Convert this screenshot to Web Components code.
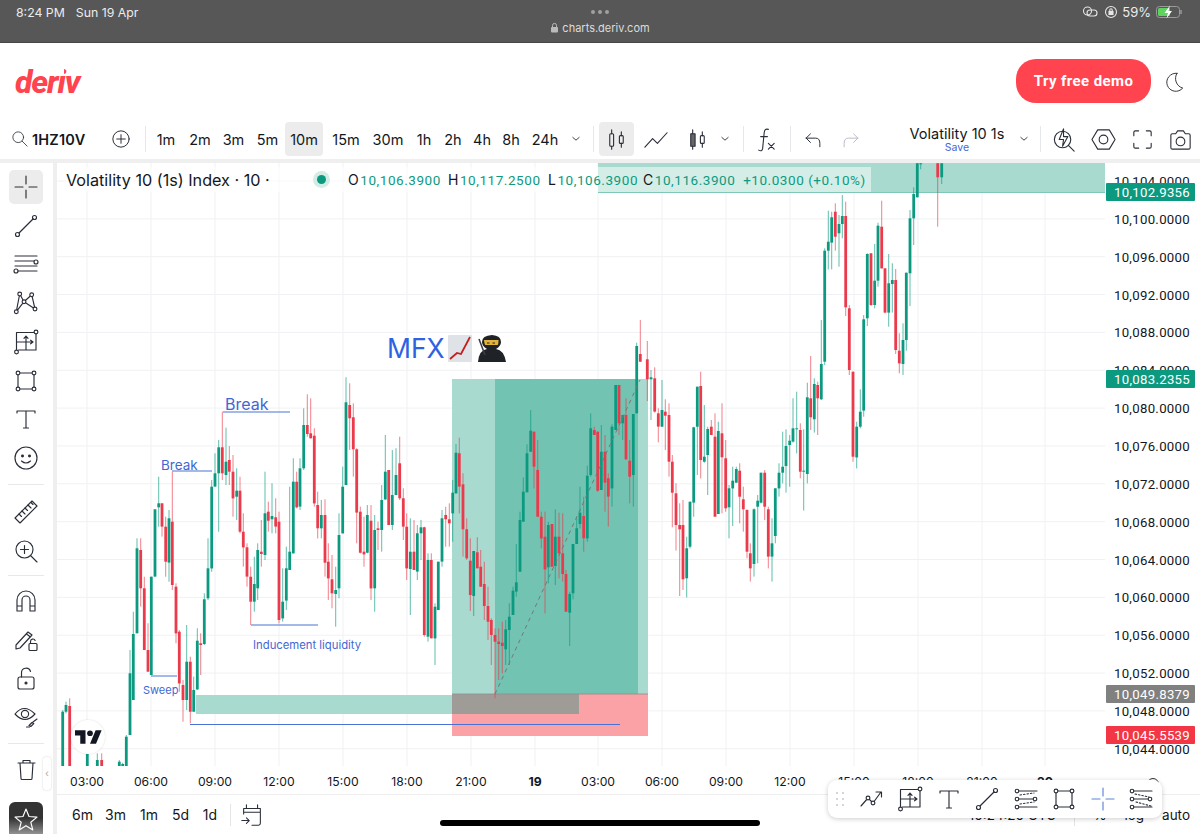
<!DOCTYPE html>
<html>
<head>
<meta charset="utf-8">
<title>charts.deriv.com</title>
<style>
  html, body { margin: 0; height: 100%; background: #fff; overflow: hidden; }
  body { width: 1200px; height: 834px; display: flex; flex-direction: column; font-family: Inter, "Liberation Sans", sans-serif; color: #131722; position: relative; }
  .main { flex: 1; display: flex; min-height: 0; }
  .right { flex: 1; display: flex; flex-direction: column; min-width: 0; }
</style>
</head>
<body>
<status-bar></status-bar>
<site-header></site-header>
<top-toolbar></top-toolbar>
<div class="main">
  <side-toolbar></side-toolbar>
  <div class="right">
    <chart-pane></chart-pane>
    <bottom-bar></bottom-bar>
  </div>
</div>
<float-toolbar></float-toolbar>
<home-bar></home-bar>

<script>
const ICONS = {
  cross: '<path d="M14 3v8M14 17v8M3 14h8M17 14h8"/>',
  line: '<circle cx="5.500" cy="22.500" r="2"/><circle cx="22.500" cy="5.500" r="2"/><path d="M7 21 21 7"/>',
  fib: '<path d="M3 5h22M3 10h19M3 15h22M6 20h19"/><circle cx="24" cy="11" r="2"/><circle cx="4" cy="20" r="2"/>',
  fibdots: '<path d="M5 6h20M5 22h20M6 14h16"/><path d="M8 10l14-2M8 19l14-2" stroke-dasharray="1.500 2"/><circle cx="5" cy="6" r="1.800" fill="#fff"/><circle cx="5" cy="14" r="1.800" fill="#fff"/><circle cx="5" cy="22" r="1.800" fill="#fff"/><circle cx="23" cy="14" r="1.800" fill="#fff"/>',
  fibdown: '<path d="M5 6h20M5 14h16M5 22h20"/><path d="M8 9l14 3M9 17l15 4" stroke-dasharray="1.500 2"/><circle cx="5" cy="6" r="1.800" fill="#fff"/><circle cx="5" cy="14" r="1.800" fill="#fff"/><circle cx="5" cy="22" r="1.800" fill="#fff"/><circle cx="23" cy="14" r="1.800" fill="#fff"/>',
  xabcd: '<path d="M4.300 22.700 7.700 5 12 12.700 19.700 5.700 23 20 12 12.700 4.300 22.700"/><circle cx="4.300" cy="22.700" r="1.900" fill="#fff"/><circle cx="7.700" cy="5" r="1.900" fill="#fff"/><circle cx="12" cy="12.700" r="1.900" fill="#fff"/><circle cx="19.700" cy="5.700" r="1.900" fill="#fff"/><circle cx="23" cy="20" r="1.900" fill="#fff"/>',
  pos: '<path d="M4.500 22V4.500H24V22H6.500M14 22V8M14 8l-2 2.400M14 8l2 2.400M4.500 14H21M21 14l-2.400-1.800M21 14l-2.400 1.800"/><circle cx="24" cy="4" r="1.900" fill="#fff"/><circle cx="4.500" cy="24" r="1.900" fill="#fff"/>',
  rect: '<path d="M6 6h16v16H6z"/><circle cx="6" cy="6" r="1.900" fill="#fff"/><circle cx="22" cy="6" r="1.900" fill="#fff"/><circle cx="6" cy="22" r="1.900" fill="#fff"/><circle cx="22" cy="22" r="1.900" fill="#fff"/>',
  text: '<path d="M5 8V6h18v2M14 6v17M11.500 23h5"/>',
  smile: '<circle cx="14" cy="14" r="11"/><circle cx="10.500" cy="12" r=".9" fill="#131722"/><circle cx="17.500" cy="12" r=".9" fill="#131722"/><path d="M9.500 17q4.500 4 9 0"/>',
  ruler: '<path d="M3 20 20 3l5 5L8 25z"/><path d="M7 16l2.500 2.500M10 13l3 3M13 10l2.500 2.500M16 7l3 3M19 4.500l2 2"/>',
  zoom: '<circle cx="12.500" cy="12.500" r="8.500"/><path d="M12.500 8.500v8M8.500 12.500h8M19 19l6 6"/>',
  magnet: '<path d="M5 24V13a9 9 0 0 1 18 0v11h-5V13a4 4 0 0 0-8 0v11zM5 19h5M18 19h5"/>',
  pencil: '<path d="M4 19 16 6l4 3L8 22l-4 1zM14.500 8l4 3"/><rect x="17" y="17.500" width="8" height="7" rx="1"/><path d="M18.500 17.500v-2a2.400 2.400 0 0 1 4.600-1"/>',
  lock: '<rect x="6" y="12" width="16" height="12" rx="2"/><path d="M9.500 12V8a4.600 4.600 0 0 1 9-1.500"/><circle cx="14" cy="18" r="1" fill="#131722"/>',
  eye: '<path d="M3 11q9-11 20 0-10 11-20 0z"/><circle cx="13" cy="11" r="3.600"/><path d="M17 22.500l3-3 1.800 1.200-3 2.800zM21 19l4-3" /><path d="M14.500 24h3"/>',
  trash: '<path d="M6 8h17M11 8V5.500h7V8M8 8l1 15.500q0 1 1 1h9q1 0 1-1l1-15.500"/>',
  star: '<path d="M14 4l3 7.500 8 .6-6.200 5.100 2 7.800-6.800-4.300L7.200 25l2-7.800L3 12.100l8-.6z" stroke="#fff"/>',
  search: '<circle cx="11.500" cy="11.500" r="7.500"/><path d="M17 17l7 7"/>',
  plus: '<circle cx="14" cy="14" r="9.500"/><path d="M14 9v10M9 14h10"/>',
  candle: '<rect x="7" y="8" width="4" height="13" rx="1"/><path d="M9 4v4M9 21v3"/><rect x="17" y="10" width="4" height="8" rx="1"/><path d="M19 6v4M19 18v4"/>',
  candle2: '<rect x="7" y="8" width="4.500" height="13" fill="#666"/><path d="M9 4v4M9 21v3"/><rect x="17" y="10" width="4" height="8" rx="1"/><path d="M19 6v4M19 18v4"/>',
  lineChart: '<path d="M3 22 11 13l5 5L26 7"/>',
  chev: '<path d="M10 12l4 3.500 4-3.500"/>',
  fx: '<path d="M17 3.500c-3-1-4 .5-4.300 3l-1.700 17c-.3 2-2 3-4 1.500M9 11h7M17 18l6 6M23 18l-6 6"/>',
  undo: '<path d="M6 13h11q5 0 5 6v4M6 13l5-5M6 13l5 5"/>',
  redo: '<path d="M22 13H11q-5 0-5 6v4M22 13l-5-5M22 13l-5 5"/>',
  bolt: '<circle cx="12" cy="14" r="8.500"/><path d="M13 3l-4.500 11H13l-1 7 5.500-10H13zM18 20l6 6" fill="#fff"/>',
  hex: '<path d="M8 4h12l6 10-6 10H8L2 14z"/><circle cx="14" cy="14" r="4.500"/>',
  full: '<path d="M5 10V6.500Q5 5 6.500 5H10M18 5h3.500Q23 5 23 6.500V10M23 18v3.500Q23 23 21.500 23H18M10 23H6.500Q5 23 5 21.500V18"/>',
  camera: '<path d="M4 9.500Q4 8 5.500 8H9l2-3h6l2 3h3.500Q24 8 24 9.500v13q0 1.500-1.500 1.500h-17Q4 24 4 22.500z"/><circle cx="14" cy="16" r="4.500"/>',
  moon: '<path d="M17 4a11 11 0 1 0 7 18A12 12 0 0 1 17 4z"/>',
  calendar: '<path d="M8 3v4M20 3v4M5 13V7h18v16q0 2-2 2h-7M5 11h18M3 20h8M8 17l3 3-3 3"/>',
  wave: '<path d="M3 21 10 13l5 5 8-11M18 7h5.500v5"/><circle cx="10" cy="13" r="1.900" fill="#fff"/><circle cx="15" cy="18" r="1.900" fill="#fff"/>'
};

customElements.define('tv-icon', class TvIcon extends HTMLElement {
  connectedCallback() {
    const size = this.getAttribute('size') || 28;
    const col = this.getAttribute('color') || '#2a2e39';
    const sw = this.getAttribute('sw') || 1.150;
    this.attachShadow({mode: 'open'}).innerHTML = `
      <style>:host{display:inline-flex;line-height:0}</style>
      <svg width="${size}" height="${size}" viewBox="0 0 28 28" fill="none" stroke="${col}" stroke-width="${sw}" stroke-linecap="round" stroke-linejoin="round">${ICONS[this.getAttribute('name')]}</svg>`;
  }
});

customElements.define('status-bar', class extends HTMLElement {
  connectedCallback() {
    this.attachShadow({mode: 'open'}).innerHTML = `
    <style>
      :host { display: grid; grid-template-columns: 1fr auto 1fr; height: 42px; background: #575757; border-bottom: 1px solid #474747; box-sizing: content-box; color: #ececec; font: 12.300px Inter, sans-serif; padding: 0 16px; }
      .l { display: flex; gap: 11px; padding-top: 5px; height: 16px; line-height: 16px; }
      .c { display: flex; flex-direction: column; align-items: center; padding-top: 10px; }
      .dots { display: flex; gap: 3px; height: 6px; margin-bottom: 4px; }
      .dots i { width: 4px; height: 4px; border-radius: 50%; background: #a0a0a0; }
      .url { display: flex; align-items: center; gap: 3px; font-size: 11px; color: #dcdcdc; height: 15px; }
      .r { display: flex; justify-content: flex-end; align-items: flex-start; gap: 4px; padding-top: 4px; line-height: 16px; font-size: 13px; }
      svg { display: block; }
    </style>
    <div class="l"><span>8:24 PM</span><span>Sun 19 Apr</span></div>
    <div class="c">
      <div class="dots"><i></i><i></i><i></i></div>
      <div class="url"><svg width="9" height="11" viewBox="0 0 9 11"><path d="M2.500 5V3.400a2 2 0 0 1 4 0V5" fill="none" stroke="#bbb"/><rect x="1" y="5" width="7" height="5.500" rx="1" fill="#bbb"/></svg><span>charts.deriv.com</span></div>
    </div>
    <div class="r">
      <svg width="16" height="16" viewBox="0 0 16 16" fill="none" stroke="#e6e6e6" stroke-width="1.100"><circle cx="5.500" cy="7" r="4"/><rect x="5" y="6" width="10" height="6" rx="3"/></svg>
      <svg width="14" height="16" viewBox="0 0 14 16" fill="none" stroke="#e6e6e6" stroke-width="1.100" style="margin-left:2px"><circle cx="7" cy="8" r="5.500"/><rect x="5" y="7.500" width="4" height="3" fill="#e6e6e6"/><path d="M5.800 7.500V6a1.200 1.200 0 0 1 2.400 0v1.500"/></svg>
      <span>59%</span>
      <svg width="29" height="16" viewBox="0 0 29 16"><rect x="1.500" y="2.500" width="23" height="11" rx="3" fill="none" stroke="#9a9a9a"/><rect x="3" y="4" width="12" height="8" rx="1.500" fill="#5fd35f"/><path d="M26 6v4" stroke="#9a9a9a" stroke-width="1.500"/><path d="M15 1.500 9.500 9h3.500l-1.500 5.500L17 7h-3.500z" fill="#fff"/></svg>
    </div>`;
  }
});

customElements.define('site-header', class extends HTMLElement {
  connectedCallback() {
    this.attachShadow({mode: 'open'}).innerHTML = `
    <style>
      :host { display: flex; align-items: center; height: 72px; background: #fff; padding: 2px 14px 0 15px; }
      .logo { position: relative; font: italic 800 32px/1 Roboto, sans-serif; color: #ff444f; letter-spacing: -1.100px; flex: 1; margin-top: 1px; }
      .logo b { position: absolute; left: 40px; top: 0; width: 9px; height: 10px; background: #fff; }
      button { width: 135px; height: 44px; border: 0; border-radius: 20px; background: #ff444f; color: #fff; font: 700 15px Roboto, sans-serif; letter-spacing: .4px; }
      tv-icon { margin-left: 12px; }
    </style>
    <div class="logo">deriv<b></b></div>
    <button>Try free demo</button>
    <tv-icon name="moon" size="23"></tv-icon>`;
  }
});

customElements.define('top-toolbar', class extends HTMLElement {
  connectedCallback() {
    // [kind, width, value] laid out left to right
    const items = [
      ['s',8],['i',24,'search',20],['sym',79,'1HZ10V'],['i',20,'plus',24],['s',14],['sep'],['s',3],
      ['t',34,'1m'],['t',34,'2m'],['t',33,'3m'],['t',35,'5m'],['t',38,'10m',1],['t',46,'15m'],['t',38,'30m'],['t',34,'1h'],['t',24,'2h'],['t',34,'4h'],['t',24,'8h'],['t',44,'24h'],
      ['i',18,'chev',22],['s',8],['sep'],['s',5],['on',35,'candle'],['s',6],['i',30,'lineChart'],['s',12],['i',30,'candle2'],['s',4],['i',18,'chev',22],['s',9],['sep'],['s',6],['i',30,'fx'],['s',10],['sep'],['s',7],['i',30,'undo',24],['s',8],['i',30,'redo',24,'#b8bcc6'],['s',34],
      ['name',114],['s',1],['i',18,'chev',22],['s',7],['sep'],['s',8],['i',30,'bolt'],['s',9],['i',30,'hex'],['s',9],['i',30,'full'],['s',8],['i',30,'camera']
    ];
    const html = items.map(([k, w, v, x, y]) => {
      if (k === 's') return `<span style="width:${w}px"></span>`;
      if (k === 'sep') return `<span class="sep"></span>`;
      if (k === 'i') return `<span class="c" style="width:${w}px"><tv-icon name="${v}" size="${x || 27}" ${y ? `color="${y}"` : ''}></tv-icon></span>`;
      if (k === 'on') return `<span class="c on" style="width:${w}px"><tv-icon name="${v}" size="27"></tv-icon></span>`;
      if (k === 'sym') return `<span class="sym" style="width:${w}px">${v}</span>`;
      if (k === 't') return `<span class="c ${x ? 'on' : ''}" style="width:${w}px">${v}</span>`;
      return `<span class="c name" style="width:${w}px"><span>Volatility 10 1s</span><small>Save</small></span>`;
    }).join('');
    this.attachShadow({mode: 'open'}).innerHTML = `
    <style>
      :host { display: flex; align-items: center; height: 40px; padding-top: 2px; background: #fff; border-bottom: 4px solid #efefef; box-sizing: content-box; font: 14.500px Inter, sans-serif; color: #131722; }
      span { flex: none; }
      .c { display: flex; align-items: center; justify-content: center; height: 34px; border-radius: 4px; }
      .on { background: #ececec; }
      .sym { font-weight: 600; font-size: 14.500px; letter-spacing: .2px; }
      .sep { width: 1px; height: 26px; background: #e6e7ea; }
      .name { flex-direction: column; font-size: 14.500px; line-height: 16px; }
      small { font-size: 10.500px; line-height: 11px; color: #4468d6; }
    </style>${html}`;
  }
});

customElements.define('side-toolbar', class extends HTMLElement {
  connectedCallback() {
    const row = (n, on) => `<div class="cell"><div class="b ${on ? 'on' : ''}"><tv-icon name="${n}" size="28"></tv-icon></div></div>`;
    this.attachShadow({mode: 'open'}).innerHTML = `
    <style>
      :host { display: flex; flex-direction: column; align-items: center; flex: none; padding-top: 5px; box-sizing: border-box; background: #fff; border-right: 4px solid #efefef; width: 57px; padding-right: 1px; position: relative; overflow: hidden; }
      .cell { height: 38.700px; display: flex; align-items: center; justify-content: center; flex: none; }
      .b { width: 34px; height: 34px; border-radius: 5px; display: flex; align-items: center; justify-content: center; }
      .on { background: #ececec; }
      hr { width: 36px; border: 0; border-top: 1px solid #e8e8e8; margin: 6px 0 8px; flex: none; }
      .star { flex: none; width: 34px; height: 33px; margin-top: 14px; border-radius: 6px 6px 0 0; background: linear-gradient(#333 45%, #aaa); display: flex; justify-content: center; padding-top: 3px; }
      .tab { position: absolute; left: 43px; top: 594px; width: 8px; height: 33px; background: #fff; border-radius: 3px; box-shadow: 0 0 2px #ccc; color: #aaa; font: 10px/33px Inter, sans-serif; text-align: center; }
    </style>
    ${row('cross', 1)}${row('line')}${row('fib')}${row('xabcd')}${row('pos')}${row('rect')}${row('text')}${row('smile')}
    <hr>
    ${row('ruler')}${row('zoom')}
    <hr style="margin:5px 0 6px">
    ${row('magnet')}${row('pencil')}${row('lock')}${row('eye')}
    <hr style="margin:6px 0">
    ${row('trash')}
    <div class="star"><tv-icon name="star" size="28" color="#fff"></tv-icon></div>
    <div class="tab">‹</div>`;
  }
});

// candle rows: colour, x, body top, body bottom, wick top, wick bottom (zoomed crop coords)
const SET_A = `g 8 1025 1190 1020 1190
g 18 1005 1025 995 1030
r 29 1008 1190 985 1190
g 82 1150 1190 1150 1190
g 112 1170 1190 1150 1190
r 125 1170 1190 1150 1190
g 178 1175 1190 1170 1190
g 188 1182 1190 1178 1190
g 199 1100 1190 1095 1190
g 210 910 1095 840 1095
g 220 792 990 725 990
g 231 535 790 505 790
r 242 540 655 505 710
r 253 655 840 620 840
r 264 840 905 760 905
g 274 620 915 620 915
g 285 418 620 418 620
g 296 400 412 320 470
r 306 400 470 400 500
r 317 470 575 440 620
g 327 445 578 420 635
r 337 455 645 305 660
r 348 650 790 640 820
r 358 785 940 780 965
r 369 945 990 930 1055
g 380 875 990 765 1020
r 391 875 1025 860 1060
g 401 960 1025 920 1025
g 412 812 958 775 960
r 422 820 825 790 915
g 433 688 822 670 825
g 444 595 685 505 690
g 455 350 595 330 605
g 465 310 350 250 350
g 476 232 310 210 485
r 487 232 310 125 330
g 498 275 315 173 345
r 508 270 305 228 345
r 519 305 385 255 440
g 530 362 380 295 450
r 540 362 485 320 490
r 550 485 532 430 590
r 561 532 620 520 650
r 572 620 695 590 765
g 583 642 695 560 725
g 593 540 655 520 690
r 604 545 552 450 590
g 615 430 555 305 570
r 625 425 452 395 485
g 636 438 448 340 490
r 647 442 470 385 490
r 657 455 750 425 760
g 668 695 745 595 755
g 679 595 692 530 720
g 689 545 600 350 600
g 700 335 550 265 550
r 710 335 412 305 415
g 720 295 410 265 420
g 731 165 295 115 300
r 742 165 192 73 200
r 752 190 205 85 205
r 763 197 400 175 410
r 773 405 475 365 505
g 784 435 475 390 505
r 795 435 578 388 620
r 805 575 625 520 690
r 816 628 670 555 715
g 827 660 672 590 770
g 837 495 655 430 685
g 848 350 490 290 490
g 858 97 345 22 345
r 869 105 145 40 240
r 880 142 238 100 320
r 890 238 428 235 520
r 901 425 548 410 550
r 912 545 553 440 590
g 922 435 548 405 550
r 933 452 655 405 690
g 944 480 655 435 725
r 954 475 480 455 540
g 965 390 480 345 545
g 976 305 388 195 390
r 986 300 465 300 465
g 997 375 465 240 480
g 1008 315 375 235 375
r 1019 280 385 200 390
r 1030 385 470 355 510
r 1040 470 595 430 630
g 1051 545 597 445 735
r 1062 545 600 450 600
g 1072 490 605 465 630
g 1083 472 490 450 570
r 1093 472 795 470 800
g 1104 570 800 550 815
r 1114 570 805 550 805
g 1125 710 805 700 885
g 1135 575 720 575 720
g 1146 445 575 420 590
r 1157 435 448 410 530
r 1168 448 460 400 530`;

const SET_B = `g 38 518 580 480 665
g 48 398 520 372 520
r 58 400 500 353 580
r 69 493 628 460 710
r 80 628 715 595 720
r 91 722 825 655 873
g 101 693 828 693 888
r 112 697 745 652 745
r 122 740 800 690 800
r 133 792 858 725 900
r 144 858 905 800 960
r 154 900 945 895 1035
r 165 945 965 925 1135
r 176 965 972 925 1080
r 187 968 978 905 1060
g 197 928 988 900 1035
g 208 890 930 850 1035
g 219 812 885 800 885
g 229 787 815 672 830
g 240 600 755 575 755
g 250 515 605 472 605
g 261 400 517 373 517
g 272 332 395 270 395
r 282 335 440 335 505
r 293 450 590 360 590
r 304 590 655 575 685
r 315 650 748 575 880
g 325 615 742 605 790
r 336 612 740 612 740
g 346 650 738 568 795
r 357 650 700 578 775
r 368 700 762 580 785
r 378 762 875 750 875
g 389 822 878 815 978
g 399 672 820 672 838
g 410 625 672 595 672
g 420 578 612 500 625
r 431 588 655 530 695
g 442 467 655 437 665
g 452 325 465 280 470
r 463 330 345 320 345
r 473 335 512 335 515
g 484 395 510 315 510
r 495 395 488 345 575
r 505 475 530 460 620
g 516 320 505 313 560
g 527 195 330 195 330
r 537 195 310 195 345
g 548 285 310 285 360
r 558 285 418 235 420
r 569 422 470 360 550
g 580 282 465 282 560
g 590 78 280 68 280
r 601 102 125 0 125
r 622 118 178 63 243
g 633 172 178 150 300
r 644 175 275 142 278
r 655 280 320 265 367
g 666 270 320 180 320
r 676 275 287 238 390
r 687 285 425 250 470
r 697 425 518 405 622
r 708 520 615 490 692
r 719 615 628 550 828
r 729 615 778 540 810
g 740 685 775 650 832
g 750 545 680 545 685
g 761 322 548 320 590
g 772 200 320 200 465
r 782 198 420 155 475
g 793 410 425 255 428
g 803 327 405 320 525
r 814 320 345 300 345
r 825 350 590 280 590
g 835 333 582 305 582
r 846 340 412 250 580
r 857 415 565 360 575
g 867 505 562 495 655
g 878 482 505 440 618
g 889 447 488 440 488`;

const SET_C = `r 239 932 1010 910 1090
r 250 1018 1048 980 1115
r 261 1050 1175 1048 1195
r 271 1180 1225 1150 1265
g 282 1048 1212 1045 1250
g 293 1022 1040 1005 1210
g 303 938 1028 938 1030
r 314 938 1040 930 1080
r 325 1048 1190 1040 1225
g 336 1150 1190 1075 1265
g 346 985 1128 985 1150
g 357 938 985 910 1010
g 368 920 938 815 970
g 378 858 918 808 998
g 389 842 855 825 980
g 399 805 845 715 848
g 410 805 808 695 880
r 421 810 935 790 955
g 431 932 935 808 1052
g 442 712 942 668 970
r 452 715 772 588 810
g 463 672 778 655 818
r 473 675 715 665 825
g 484 612 718 480 720
g 494 272 605 265 615
g 505 245 272 152 328
g 515 172 248 155 328
r 526 155 230 130 272
g 537 192 220 165 320
g 547 168 192 105 235
r 557 168 442 125 468
r 568 445 630 435 645
r 579 635 890 635 905
g 590 800 892 785 925
g 601 755 800 688 805
g 611 478 752 465 770
g 622 282 475 280 498
r 633 280 435 280 438
g 644 362 435 252 445
g 654 197 362 188 380
r 665 200 325 122 325
r 675 325 458 325 460
g 686 370 458 282 500
g 697 360 372 310 458
r 707 360 570 327 582
r 718 572 610 520 640
g 729 540 612 490 645
g 739 338 540 338 572
g 750 175 340 150 438
g 761 102 175 82 255
g 772 10 112 0 112
g 782 10 12 0 28
r 833 10 52 0 200
g 845 10 52 0 72`;

customElements.define('chart-pane', class extends HTMLElement {
  connectedCallback() {
    const GREEN = '#0b9a80', RED = '#ea3a4b';
    const candles = (src, ox, oy) => src.split('\n').map(l => {
      const [c, x, t, b, h, lo] = l.trim().split(' ');
      const col = c === 'g' ? GREEN : RED;
      const sx = ox + x / 3, f = v => (oy + v / 3).toFixed(1);
      return `<rect x="${(sx - .5).toFixed(1)}" y="${f(h)}" width="1" height="${((lo - h) / 3).toFixed(1)}" fill="${col}" opacity=".65"/>` +
        `<rect x="${(sx - 1.400).toFixed(1)}" y="${f(t)}" width="2.800" height="${Math.max((b - t) / 3, 1).toFixed(1)}" fill="${col}"/>`;
    }).join('');
    const xs = [87, 151, 215, 279, 343, 407, 471, 535, 598, 662, 726, 790, 854, 918, 982, 1045];
    const times = ['03:00','06:00','09:00','12:00','15:00','18:00','21:00','19','03:00','06:00','09:00','12:00','15:00','18:00','21:00','20'];
    const prices = [];
    for (let i = 0; i < 16; i++) prices.push([10104 - 4 * i, 181 + i * 37.85]);
    const fmt = n => n.toString().replace(/(\d\d)(\d{3})/, '$1,$2') + '.0000';
    const grid = xs.map(x => `<path d="M${x} 163V766"/>`).join('') + prices.map(p => `<path d="M57 ${p[1]}H1105"/>`).join('');
    const tag = (y, col, txt) => `<rect x="1106" y="${y}" width="89" height="18" rx="1" fill="${col}"/><text x="1152" y="${y + 14}" text-anchor="middle" fill="#fff" class="p">${txt}</text>`;
    this.attachShadow({mode: 'open'}).innerHTML = `
    <style>
      :host { display: block; position: relative; height: 631px; flex: none; background: #fff; border-bottom: 1px solid #eee; box-sizing: content-box; }
      svg.main { display: block; }
      text { font-family: Inter, sans-serif; }
      .p { font: 13.200px Roboto, sans-serif; letter-spacing: .3px; }
      .t { font-size: 12.200px; fill: #131722; }
      .an { fill: #3f68d4; }
      .legend { position: absolute; left: 9px; top: 4px; width: 805px; height: 25px; display: flex; align-items: center; background: rgba(255,255,255,.5); font: 13.500px Roboto, sans-serif; letter-spacing: .55px; color: #0d9a80; white-space: nowrap; }
      .name { color: #131722; font: 16.200px Inter, sans-serif; letter-spacing: 0; width: 251px; flex: none; }
      .dot { width: 9px; height: 9px; border-radius: 50%; background: #0b9a80; box-shadow: 0 0 0 4px #d4ece6; margin-right: 22px; flex: none; }
      .v { width: 100px; flex: none; }
      .v.last { width: 227px; }
      b { color: #131722; font: 14px Inter, sans-serif; margin-right: 1px; }
      .logo { position: absolute; left: 14px; top: 557px; width: 34px; height: 34px; border-radius: 50%; background: #fff; box-shadow: 0 0 2px rgba(0,0,0,.15); display: flex; align-items: center; justify-content: center; }
    </style>
    <svg class="main" width="1143" height="631" viewBox="57 163 1143 631">
      <defs><clipPath id="plot"><rect x="57" y="163" width="1048" height="603"/></clipPath></defs>
      <g stroke="#f0f1f4" stroke-width="1">${grid}</g>
      <g clip-path="url(#plot)">
        <rect x="598" y="163" width="507" height="29" fill="#a8dacf"/>
        <path d="M598 192.500H1105" stroke="#7fc7b7"/>
        <rect x="452" y="379" width="196" height="315" fill="#a8dacf"/>
        <rect x="495" y="379" width="143" height="315" fill="#72c3b1"/>
        <rect x="452" y="694" width="196" height="42" fill="#faa2a6"/>
        <rect x="196" y="695" width="256" height="19" fill="#a8dacf"/>
        <rect x="452" y="694" width="127" height="20" fill="#9f9c98"/>
        <path d="M452 694H648" stroke="#8a8f8c" stroke-width=".8"/>
        ${candles(SET_A, 60, 370)}${candles(SET_B, 440, 320)}${candles(SET_C, 660, 160)}
        <path d="M495 694 640 380" stroke="#777" stroke-width="1" stroke-dasharray="4 4" fill="none"/>
        <g stroke="#4a72d6" stroke-width="1.100" fill="none">
          <path d="M223 412H290M172 471H212M251 625H318M151 676H177M190 724.500H620"/>
        </g>
        <text x="225" y="410" class="an" font-size="16">Break</text>
        <text x="161" y="470" class="an" font-size="13.500">Break</text>
        <text x="253" y="649" class="an" font-size="11.300">Inducement liquidity</text>
        <text x="143" y="694" class="an" font-size="11">Sweep</text>
        <text x="387" y="358" fill="#2f62e0" font-size="26.500">MFX</text>
        <g>
          <rect x="448" y="335" width="24" height="27" rx="1" fill="#dfe3e8"/>
          <path d="M450 359l7-6 4 1 9-17" fill="none" stroke="#c41e1e" stroke-width="1.800"/>
          <path d="M478 362q1-12 9-13 -5-3-5-7 0-6.500 10-7 9 .5 9 7 0 4-5 7 8 1 10 13z" fill="#1f2226"/>
          <path d="M484 340h14.500q0 5-1 5h-12q-1 0-1.500-5z" fill="#e2b23a"/>
          <path d="M487 343h2.500M492.500 343h2.500" stroke="#1f2226" stroke-width="1.200"/>
          <path d="M479 339l6 16" stroke="#3a3d42" stroke-width="1.600"/>
        </g>
      </g>
      ${prices.map(p => `<text x="1190" y="${p[1] + 5}" text-anchor="end" class="p" fill="#131722">${fmt(p[0])}</text>`).join('')}
      ${tag(183, '#0b9a80', '10,102.9356')}${tag(370, '#0b9a80', '10,083.2355')}${tag(685, '#808080', '10,049.8379')}${tag(726, '#f23645', '10,045.5539')}
      ${times.map((t, i) => `<text x="${xs[i]}" y="786" text-anchor="middle" class="t" ${t.length < 3 ? 'font-weight="700"' : ''}>${t}</text>`).join('')}
      <circle cx="1153" cy="784" r="5.500" fill="none" stroke="#333"/>
    </svg>
    <div class="legend">
      <span class="name">Volatility 10 (1s) Index · 10 ·</span>
      <span class="dot"></span>
      <span class="v"><b>O</b>10,106.3900</span><span class="v"><b>H</b>10,117.2500</span><span class="v" style="width:95px"><b>L</b>10,106.3900</span><span class="v last"><b>C</b>10,116.3900 &nbsp;+10.0300 (+0.10%)</span>
    </div>
    <div class="logo"><svg width="27" height="16" viewBox="0 0 36 20"><path d="M14 19H7V8H0V1h14zM28 19h-8L27.500 1h8z" fill="#131722"/><circle cx="20" cy="5" r="3.800" fill="#131722"/></svg></div>`;
  }
});

customElements.define('bottom-bar', class extends HTMLElement {
  connectedCallback() {
    const items = [['6m', 33], ['3m', 33], ['1m', 34], ['5d', 29], ['1d', 30]];
    this.attachShadow({mode: 'open'}).innerHTML = `
    <style>
      :host { display: flex; align-items: center; flex: none; height: 39px; background: #fff; padding-left: 9px; font: 14px Inter, sans-serif; color: #131722; position: relative; }
      span { text-align: center; flex: none; }
      .sep { width: 1px; height: 22px; background: #e4e5e8; margin: 0 8px 0 5px; }
      .r { margin-left: auto; display: flex; align-items: center; gap: 18px; padding-right: 10px; font-size: 13.500px; }
      .r .sep { margin: 0; }
    </style>
    ${items.map(([t, w]) => `<span style="width:${w}px">${t}</span>`).join('')}
    <span class="sep"></span>
    <tv-icon name="calendar" size="26"></tv-icon>
    <div class="r"><span>10:24:20 UTC</span><span class="sep"></span><span>%</span><span>log</span><span>auto</span></div>`;
  }
});

customElements.define('float-toolbar', class extends HTMLElement {
  connectedCallback() {
    const names = ['wave', 'pos', 'text', 'line', 'fibdots', 'rect', 'cross', 'fibdown'];
    this.attachShadow({mode: 'open'}).innerHTML = `
    <style>
      :host { position: absolute; left: 828px; top: 780px; width: 334px; height: 38px; display: flex; align-items: center; padding-left: 8px; gap: 10.500px; box-sizing: border-box; background: #fff; border-radius: 9px; box-shadow: 0 1px 5px rgba(0,0,0,.2); }
      .grip { width: 8px; margin-right: 3px; display: grid; grid-template-columns: 2px 2px; gap: 4px; }
      .grip i { width: 2px; height: 2px; border-radius: 50%; background: #c4c7d0; }
    </style>
    <div class="grip"><i></i><i></i><i></i><i></i><i></i><i></i></div>
    ${names.map(n => `<tv-icon name="${n}" size="28" ${n === 'cross' ? 'color="#5b85d6"' : ''}></tv-icon>`).join('')}`;
  }
});

customElements.define('home-bar', class extends HTMLElement {
  connectedCallback() {
    this.attachShadow({mode: 'open'}).innerHTML = `<style>:host { position: absolute; left: 440px; top: 820px; width: 320px; height: 6px; border-radius: 3px; background: #000; }</style>`;
  }
});
</script>
</body>
</html>
